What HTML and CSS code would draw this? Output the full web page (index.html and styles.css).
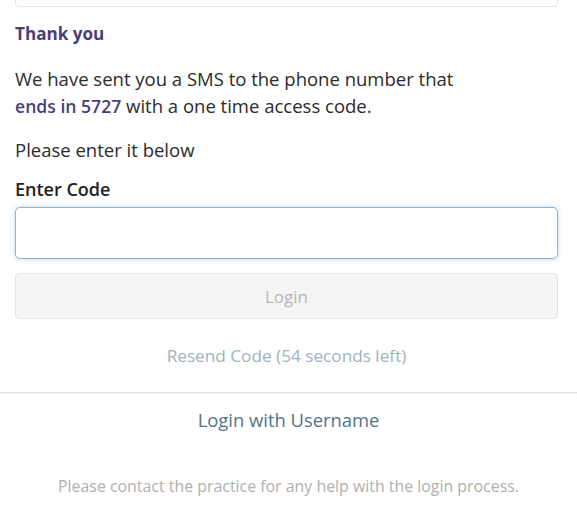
FILE: index.html
```html
<!DOCTYPE html>
<html>
<head>
<meta charset="utf-8">
<link rel="stylesheet" href="styles.css">
</head>
<body>
<div class="card">
  <div class="card-inner">
    <div class="prev-field"></div>
    <h2 class="title">Thank you</h2>
    <p class="msg">We have sent you a SMS to the phone number that<br><strong class="hl">ends in 5727</strong> with a one time access code.</p>
    <p class="msg2">Please enter it below</p>
    <label class="label" for="code">Enter Code</label>
    <input class="code-input" id="code" type="text">
    <button class="login-btn" type="button" disabled>Login</button>
    <div class="resend">Resend Code (54 seconds left)</div>
  </div>
</div>
<div class="alt">Login with Username</div>
<div class="help">Please contact the practice for any help with the login process.</div>
</body>
</html>
```

FILE: styles.css
```css
html, body {
  margin: 0;
  padding: 0;
  background: #ffffff;
  font-family: "Open Sans", "Noto Sans", sans-serif;
  color: #2b2b2b;
}

.card {
  border-bottom: 1px solid #e2e2e2;
  box-shadow: 0 1px 2px rgba(0,0,0,0.06);
  height: 393px;
  box-sizing: border-box;
}

.card-inner {
  padding: 0 19px 0 15px;
}

.prev-field {
  height: 7px;
  border: 1px solid #e4e4e4;
  border-top: none;
  border-radius: 0 0 4px 4px;
  box-sizing: border-box;
  background: #fff;
}

.title {
  margin: 16px 0 0;
  font-size: 17.1px;
  line-height: 22px;
  font-weight: 700;
  color: #4a3f78;
}

.msg {
  margin: 20px 0 0;
  font-size: 18.5px;
  line-height: 27px;
}

.hl {
  color: #4a3f78;
  font-weight: 600;
  font-size: 17.6px;
  line-height: 1;
}

.msg2 {
  margin: 17px 0 0;
  font-size: 18.5px;
  line-height: 27px;
}

.label {
  display: block;
  margin-top: 14px;
  font-size: 18px;
  line-height: 24px;
  font-weight: 600;
  color: #222;
}

.code-input {
  display: block;
  width: 100%;
  box-sizing: border-box;
  height: 52px;
  margin-top: 6px;
  border: 1px solid #8fb3cc;
  border-radius: 5px;
  box-shadow: 0 0 5px rgba(102, 175, 233, 0.45);
  outline: none;
  background: #fff;
}

.login-btn {
  display: block;
  width: 100%;
  box-sizing: border-box;
  height: 46px;
  margin-top: 14px;
  border: 1px solid #e6e6e6;
  border-radius: 4px;
  background: #f5f5f5;
  color: #b5b5b5;
  font-family: "Open Sans", "Noto Sans", sans-serif;
  font-size: 17px;
}

.resend {
  margin-top: 26px;
  text-align: center;
  font-size: 17.2px;
  line-height: 22px;
  color: #9db3bf;
}

.alt {
  margin-top: 15px;
  text-align: center;
  font-size: 18.4px;
  line-height: 24px;
  color: #52758d;
}

.help {
  margin-top: 44px;
  text-align: center;
  font-size: 15.9px;
  line-height: 20px;
  color: #b0b0b0;
}
```
